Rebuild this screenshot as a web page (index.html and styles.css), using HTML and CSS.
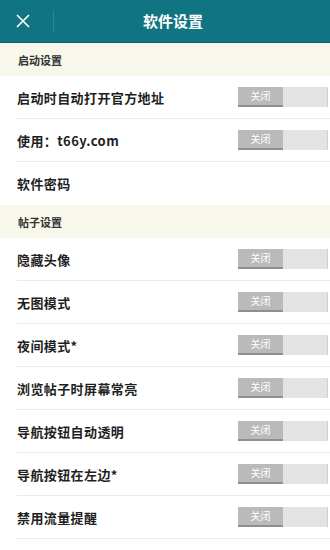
FILE: index.html
```html
<!DOCTYPE html>
<html lang="zh">
<head>
<meta charset="utf-8">
<title>软件设置</title>
<link rel="stylesheet" href="styles.css">
</head>
<body>
<div class="app">
  <header class="topbar">
    <button class="close" aria-label="关闭">
      <svg width="14" height="14" viewBox="0 0 14 14"><path d="M1 1 L13 13 M13 1 L1 13" stroke="#ffffff" stroke-width="1.6" fill="none"/></svg>
    </button>
    <span class="divider"></span>
    <h1 class="title">软件设置</h1>
  </header>

  <div class="section">启动设置</div>
  <div class="row"><span class="label">启动时自动打开官方地址</span><span class="toggle"><span class="off">关闭</span><span class="rest"></span></span></div>
  <div class="row"><span class="label">使用：t66y.com</span><span class="toggle"><span class="off">关闭</span><span class="rest"></span></span></div>
  <div class="row last"><span class="label">软件密码</span></div>

  <div class="section">帖子设置</div>
  <div class="row"><span class="label">隐藏头像</span><span class="toggle"><span class="off">关闭</span><span class="rest"></span></span></div>
  <div class="row"><span class="label">无图模式</span><span class="toggle"><span class="off">关闭</span><span class="rest"></span></span></div>
  <div class="row"><span class="label">夜间模式*</span><span class="toggle"><span class="off">关闭</span><span class="rest"></span></span></div>
  <div class="row"><span class="label">浏览帖子时屏幕常亮</span><span class="toggle"><span class="off">关闭</span><span class="rest"></span></span></div>
  <div class="row"><span class="label">导航按钮自动透明</span><span class="toggle"><span class="off">关闭</span><span class="rest"></span></span></div>
  <div class="row"><span class="label">导航按钮在左边*</span><span class="toggle"><span class="off">关闭</span><span class="rest"></span></span></div>
  <div class="row"><span class="label">禁用流量提醒</span><span class="toggle"><span class="off">关闭</span><span class="rest"></span></span></div>
</div>
</body>
</html>
```
FILE: styles.css
```css
* { box-sizing: border-box; }
html, body { margin: 0; padding: 0; background: #ffffff; }
body {
  width: 330px;
  height: 550px;
  overflow: hidden;
  font-family: "Noto Sans CJK SC", "Liberation Sans", sans-serif;
  color: #222222;
}
.app { display: flex; flex-direction: column; }
.topbar {
  height: 43px;
  background: #117482;
  border-bottom: 1px solid #0c5f6b;
  display: flex;
  align-items: center;
  position: relative;
}
.close {
  width: 46px;
  height: 42px;
  padding: 0 0 0 16px;
  margin: 0;
  border: 0;
  background: transparent;
  display: flex;
  align-items: center;
}
.divider {
  width: 1px;
  height: 22px;
  background: #2c8794;
  margin-left: 7px;
}
.title {
  position: absolute;
  left: 0;
  right: 0;
  top: 0;
  height: 42px;
  line-height: 42px;
  margin: 0;
  text-align: center;
  font-size: 15px;
  font-weight: 700;
  color: #ffffff;
  padding-left: 16px;
  pointer-events: none;
}
.section {
  height: 33px;
  background: #f7f7eb;
  display: flex;
  align-items: center;
  padding-left: 18px;
  font-size: 11px;
  font-weight: 700;
  color: #333333;
}
.row {
  height: 43px;
  margin-left: 17px;
  border-bottom: 1px solid #ebebeb;
  display: flex;
  align-items: center;
  justify-content: space-between;
}
.row.last { border-bottom: 0; }
.label {
  font-size: 13px;
  letter-spacing: 0.4px;
  font-weight: 700;
  color: #1f1f1f;
}
.toggle {
  display: flex;
  width: 90px;
  height: 20px;
  margin-right: 2px;
}
.off {
  width: 45px;
  height: 20px;
  background: #bababa;
  border-bottom: 2px solid #8f8f8f;
  color: #ffffff;
  font-size: 10px;
  line-height: 18px;
  text-align: center;
}
.rest {
  flex: 1;
  height: 20px;
  background: #e3e3e3;
  border-right: 1px solid #cfcfcf;
}
```
